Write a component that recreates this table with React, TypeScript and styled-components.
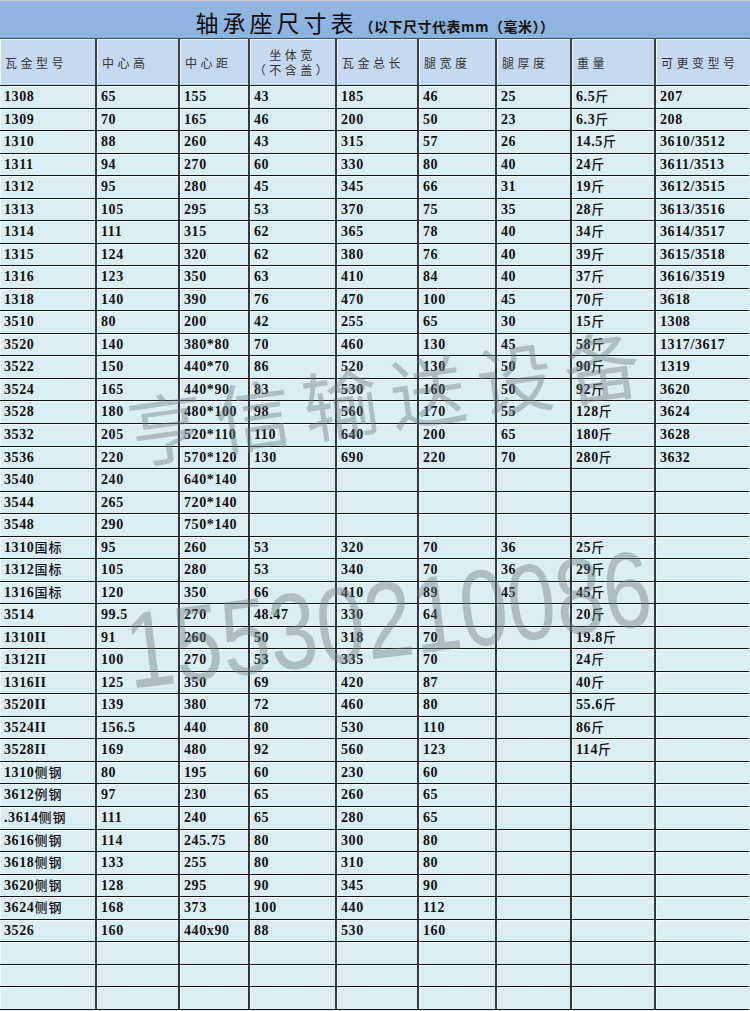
import styled, { createGlobalStyle } from "styled-components"

const GlobalStyle = createGlobalStyle`
  html, body {
    margin: 0;
    padding: 0;
    background: #ffffff;
  }
  body {
    width: 750px;
    height: 1011px;
    overflow: hidden;
    font-family: "Liberation Serif", "Noto Sans CJK SC", serif;
  }
`

const COLUMNS = [97, 83, 70, 87, 82, 78, 75, 84, 94]

const HEADERS = ['瓦金型号', '中心高', '中心距', '坐体宽', '瓦金总长', '腿宽度', '腿厚度', '重量', '可更变型号']

const ROWS: string[][] = [
  ['1308', '65', '155', '43', '185', '46', '25', '6.5斤', '207'],
  ['1309', '70', '165', '46', '200', '50', '23', '6.3斤', '208'],
  ['1310', '88', '260', '43', '315', '57', '26', '14.5斤', '3610/3512'],
  ['1311', '94', '270', '60', '330', '80', '40', '24斤', '3611/3513'],
  ['1312', '95', '280', '45', '345', '66', '31', '19斤', '3612/3515'],
  ['1313', '105', '295', '53', '370', '75', '35', '28斤', '3613/3516'],
  ['1314', '111', '315', '62', '365', '78', '40', '34斤', '3614/3517'],
  ['1315', '124', '320', '62', '380', '76', '40', '39斤', '3615/3518'],
  ['1316', '123', '350', '63', '410', '84', '40', '37斤', '3616/3519'],
  ['1318', '140', '390', '76', '470', '100', '45', '70斤', '3618'],
  ['3510', '80', '200', '42', '255', '65', '30', '15斤', '1308'],
  ['3520', '140', '380*80', '70', '460', '130', '45', '58斤', '1317/3617'],
  ['3522', '150', '440*70', '86', '520', '130', '50', '90斤', '1319'],
  ['3524', '165', '440*90', '83', '530', '160', '50', '92斤', '3620'],
  ['3528', '180', '480*100', '98', '560', '170', '55', '128斤', '3624'],
  ['3532', '205', '520*110', '110', '640', '200', '65', '180斤', '3628'],
  ['3536', '220', '570*120', '130', '690', '220', '70', '280斤', '3632'],
  ['3540', '240', '640*140'],
  ['3544', '265', '720*140'],
  ['3548', '290', '750*140'],
  ['1310国标', '95', '260', '53', '320', '70', '36', '25斤'],
  ['1312国标', '105', '280', '53', '340', '70', '36', '29斤'],
  ['1316国标', '120', '350', '66', '410', '89', '45', '45斤'],
  ['3514', '99.5', '270', '48.47', '330', '64', '', '20斤'],
  ['1310II', '91', '260', '50', '318', '70', '', '19.8斤'],
  ['1312II', '100', '270', '53', '335', '70', '', '24斤'],
  ['1316II', '125', '350', '69', '420', '87', '', '40斤'],
  ['3520II', '139', '380', '72', '460', '80', '', '55.6斤'],
  ['3524II', '156.5', '440', '80', '530', '110', '', '86斤'],
  ['3528II', '169', '480', '92', '560', '123', '', '114斤'],
  ['1310侧钢', '80', '195', '60', '230', '60'],
  ['3612例钢', '97', '230', '65', '260', '65'],
  ['.3614侧钢', '111', '240', '65', '280', '65'],
  ['3616侧钢', '114', '245.75', '80', '300', '80'],
  ['3618侧钢', '133', '255', '80', '310', '80'],
  ['3620侧钢', '128', '295', '90', '345', '90'],
  ['3624侧钢', '168', '373', '100', '440', '112'],
  ['3526', '160', '440x90', '88', '530', '160'],
  [],
  [],
  [],
]

// split latin digits from chinese so the chinese part can be set lighter
const renderValue = (text: string) =>
  text.split(/([\u4e00-\u9fff]+)/).filter(Boolean).map((part, i) =>
    /[\u4e00-\u9fff]/.test(part) ? <Han key={i}>{part}</Han> : <span key={i}>{part}</span>
  )

export default function App() {
  return (
    <>
      <GlobalStyle />
      <Sheet>
        <TitleBar>
          <Title>轴承座尺寸表</Title>
          <Subtitle>（以下尺寸代表mm（毫米））</Subtitle>
        </TitleBar>
        <Grid>
          {HEADERS.map((h, i) =>
            i === 3 ? (
              <HeadCell key={h} $center>
                <span>{h}</span>
                <span>（不含盖）</span>
              </HeadCell>
            ) : (
              <HeadCell key={h} $last={i === COLUMNS.length - 1}>{h}</HeadCell>
            )
          )}
          {ROWS.map((row, r) =>
            COLUMNS.map((_, c) => (
              <Cell key={`${r}-${c}`} $last={c === COLUMNS.length - 1}>
                {renderValue(row[c] ?? '')}
              </Cell>
            ))
          )}
        </Grid>
        <BrandMark>亨信输送设备</BrandMark>
        <PhoneMark>15530210086</PhoneMark>
      </Sheet>
    </>
  )
}

const Sheet = styled.div`
  position: relative;
  width: 750px;
  height: 1011px;
  overflow: hidden;
  background: #daeef3;
`

const TitleBar = styled.div`
  height: 39px;
  display: flex;
  align-items: baseline;
  justify-content: center;
  padding-top: 8px;
  box-sizing: border-box;
  background: linear-gradient(#94b6df, #8cb2e0);
  border-top: 1px solid #c9c9c9;
  border-bottom: 1px solid #3e4a55;
`

const Title = styled.span`
  font-family: "Noto Sans CJK SC", sans-serif;
  font-size: 23px;
  letter-spacing: 4px;
  color: #0c0c0c;
  line-height: 26px;
`

const Subtitle = styled.span`
  font-family: "Noto Sans CJK SC", sans-serif;
  font-weight: 700;
  font-size: 14px;
  letter-spacing: 0.5px;
  color: #111;
  margin-left: 2px;
`

const Grid = styled.div`
  display: grid;
  grid-template-columns: ${COLUMNS.map((w) => `${w}px`).join(' ')};
  grid-template-rows: 47px;
  grid-auto-rows: 22.54px;
`

const HeadCell = styled.div<{ $center?: boolean; $last?: boolean }>`
  display: flex;
  flex-direction: column;
  justify-content: center;
  align-items: ${(p) => (p.$center ? 'center' : 'flex-start')};
  padding-left: ${(p) => (p.$center ? '0' : '5px')};
  background: #c5d9f1;
  border-right: ${(p) => (p.$last ? '2px solid #c5d9f1' : '2px solid #3a3f42')};
  border-bottom: 1px solid #1a1a1a;
  box-shadow: inset 0 1px 0 #eef4fb, inset 1px 0 0 #eef4fb;
  font-family: "Noto Sans CJK SC", sans-serif;
  font-size: 12px;
  line-height: 15px;
  letter-spacing: 3.5px;
  color: #333;
  overflow: hidden;
  white-space: nowrap;
`

const Cell = styled.div<{ $last?: boolean }>`
  display: block;
  padding-left: 4px;
  background: #daeef3;
  border-right: ${(p) => (p.$last ? '2px solid #daeef3' : '2px solid #33393b')};
  border-bottom: 1px solid #141414;
  box-shadow: inset 0 1px 0 #f2fafc, inset 1px 0 0 #f2fafc;
  font-family: "Liberation Serif", "Noto Sans CJK SC", serif;
  font-weight: 700;
  font-size: 14px;
  line-height: 21px;
  letter-spacing: 0.6px;
  color: #111;
  white-space: nowrap;
  overflow: hidden;
`

const Han = styled.span`
  font-family: "Noto Sans CJK SC", sans-serif;
  font-weight: 500;
  font-size: 13px;
  line-height: 1;
  letter-spacing: 1px;
  vertical-align: baseline;
`

const BrandMark = styled.div`
  position: absolute;
  left: 128px;
  top: 392px;
  font-family: "Noto Sans CJK SC", sans-serif;
  font-weight: 400;
  font-size: 76px;
  letter-spacing: 12px;
  line-height: 1;
  color: rgba(110, 125, 130, 0.42);
  transform: rotate(-8deg);
  transform-origin: left center;
  pointer-events: none;
  white-space: nowrap;
`

const PhoneMark = styled.div`
  position: absolute;
  left: 126px;
  top: 598px;
  font-family: "Liberation Sans", sans-serif;
  font-size: 108px;
  line-height: 1;
  color: rgba(110, 125, 130, 0.42);
  transform: rotate(-7deg) scaleX(0.8);
  transform-origin: left center;
  pointer-events: none;
  white-space: nowrap;
`
